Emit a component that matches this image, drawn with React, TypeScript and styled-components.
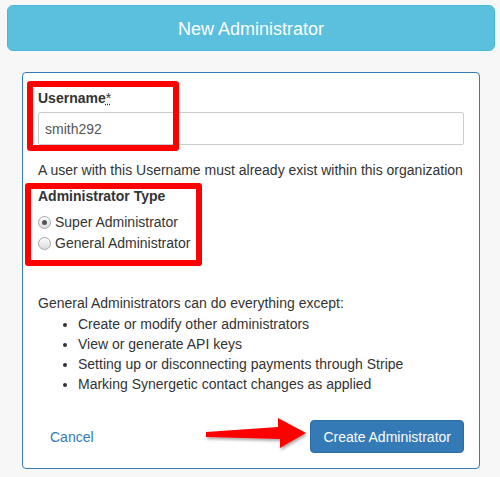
import React from "react";
import styled, { createGlobalStyle } from "styled-components";

const Global = createGlobalStyle`
  html, body {
    margin: 0;
    padding: 0;
    background: #f7f7f7;
  }
  body {
    font-family: "Liberation Sans", Arial, Helvetica, sans-serif;
    font-size: 14px;
    line-height: 20px;
    color: #333;
  }
`;

const App = () => {
  return (
    <Page>
      <Global />
      <Header>New Administrator</Header>
      <Card>
        <Label>
          Username<Req title="required">*</Req>
        </Label>
        <Input defaultValue="smith292" />
        <Help>A user with this Username must already exist within this organization</Help>

        <Label $top={6}>Administrator Type</Label>
        <Radios>
          <RadioRow>
            <Radio type="radio" name="type" defaultChecked />
            Super Administrator
          </RadioRow>
          <RadioRow>
            <Radio type="radio" name="type" />
            General Administrator
          </RadioRow>
        </Radios>

        <Intro>General Administrators can do everything except:</Intro>
        <List>
          <li>Create or modify other administrators</li>
          <li>View or generate API keys</li>
          <li>Setting up or disconnecting payments through Stripe</li>
          <li>Marking Synergetic contact changes as applied</li>
        </List>

        <Footer>
          <CancelLink href="#">Cancel</CancelLink>
          <PrimaryButton>Create Administrator</PrimaryButton>
        </Footer>

        <RedBox $top={8} $left={4} $w={152} $h={70} />
        <RedBox $top={110} $left={2} $w={177} $h={83} />
        <Arrow width="112" height="44" viewBox="0 0 112 44">
          <defs>
            <filter id="sh" x="-20%" y="-40%" width="140%" height="180%">
              <feDropShadow dx="1" dy="2" stdDeviation="1.5" floodColor="#000" floodOpacity="0.35" />
            </filter>
          </defs>
          <polygon
            points="6,19 78,14 78,5 106,20 80,35 80,26 6,24"
            fill="#ff0000"
            filter="url(#sh)"
          />
        </Arrow>
      </Card>
    </Page>
  );
};

export default App;

const Page = styled.div`
  padding: 5px 5px 0 7px;
`;

const Header = styled.div`
  box-sizing: border-box;
  width: 488px;
  height: 46px;
  padding-top: 2px;
  background: #5bc0de;
  border: 1px solid #46b8da;
  border-radius: 6px;
  color: #fff;
  font-size: 18px;
  display: flex;
  align-items: center;
  justify-content: center;
`;

const Card = styled.div`
  position: relative;
  box-sizing: border-box;
  width: 458px;
  height: 397px;
  margin: 21px 0 0 15px;
  padding: 15px 15px 15px 15px;
  background: #fff;
  border: 1px solid #337ab7;
  border-radius: 4px;
  display: flex;
  flex-direction: column;
`;

const Label = styled.div<{ $top?: number }>`
  font-weight: bold;
  margin-top: ${(p) => p.$top || 0}px;
  margin-bottom: 4px;
`;

const Req = styled.abbr`
  font-weight: normal;
  text-decoration: underline dotted;
  cursor: help;
`;

const Input = styled.input`
  box-sizing: border-box;
  width: 100%;
  height: 33px;
  padding: 6px 6px;
  border: 1px solid #ccc;
  border-radius: 2px;
  font: inherit;
  color: #555;
  outline: none;
`;

const Help = styled.div`
  margin-top: 15px;
`;

const Radios = styled.div`
  margin-top: 2px;
  display: flex;
  flex-direction: column;
  gap: 1px;
`;

const RadioRow = styled.label`
  display: flex;
  align-items: center;
  gap: 4px;
`;

const Radio = styled.input`
  appearance: none;
  width: 13px;
  height: 13px;
  margin: 0;
  border-radius: 50%;
  border: 1px solid #a6a6a6;
  background: linear-gradient(#fdfdfd, #dcdcdc);
  position: relative;
  &:checked::after {
    content: "";
    position: absolute;
    left: 3px;
    top: 3px;
    width: 5px;
    height: 5px;
    border-radius: 50%;
    background: #555;
  }
`;

const Intro = styled.div`
  margin-top: 40px;
`;

const List = styled.ul`
  margin: 1px 0 0;
  padding-left: 40px;
`;

const Footer = styled.div`
  margin-top: auto;
  display: flex;
  justify-content: space-between;
  align-items: center;
`;

const CancelLink = styled.a`
  color: #337ab7;
  text-decoration: none;
  padding: 6px 12px;
`;

const PrimaryButton = styled.button`
  height: 33px;
  padding: 0 12px;
  background: #337ab7;
  border: 1px solid #2e6da4;
  border-radius: 4px;
  color: #fff;
  font: inherit;
`;

const RedBox = styled.div<{ $top: number; $left: number; $w: number; $h: number }>`
  position: absolute;
  top: ${(p) => p.$top}px;
  left: ${(p) => p.$left}px;
  width: ${(p) => p.$w}px;
  height: ${(p) => p.$h}px;
  box-sizing: border-box;
  border: 6px solid #ff0000;
  border-radius: 3px;
  pointer-events: none;
`;

const Arrow = styled.svg`
  position: absolute;
  left: 177px;
  top: 340px;
`;
